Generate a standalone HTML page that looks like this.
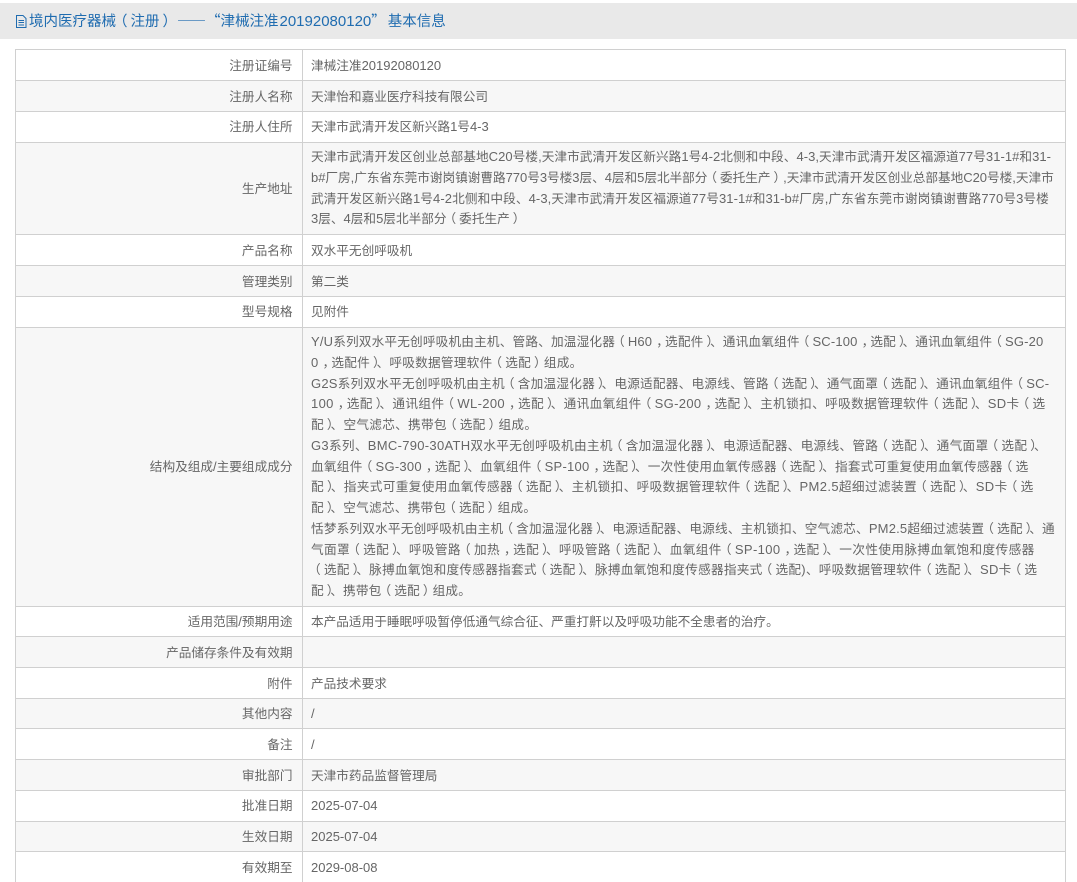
<!DOCTYPE html>
<html lang="zh-CN">
<head>
<meta charset="utf-8">
<title>基本信息</title>
<style>
html,body{margin:0;padding:0;background:#fff;}
body{width:1077px;height:882px;overflow:hidden;position:relative;font-family:"Liberation Sans","Noto Sans CJK SC",sans-serif;font-size:12.65px;color:#666;}
i{font-style:normal;font-size:13px;line-height:0;}
u,s,em{text-decoration:none;font-style:normal;position:relative;font-family:"Noto Sans CJK SC",sans-serif;line-height:0;}
u{left:-3px;}s{left:3px;}em{left:4px;}
#hd{position:absolute;left:0;top:3px;width:1077px;height:36px;background:#e9e9e9;}
#hd span{position:absolute;left:29px;top:1px;line-height:36px;color:#1f6cb0;white-space:nowrap;font-size:14.5px;}
#hd i{font-size:15px;margin-left:1px;}
#hd b{font-weight:normal;font-family:"Noto Sans CJK SC",sans-serif;line-height:0;margin-left:3px;}
#hd b.e{margin-left:0;margin-right:2px;}
#hd svg{position:absolute;left:16px;top:12px;}
#tb{position:absolute;left:15px;top:49px;width:1049px;height:833px;border-left:1px solid #d0d0d0;border-right:1px solid #d0d0d0;}
#v{position:absolute;left:286px;top:0;width:1px;height:833px;background:#d0d0d0;z-index:2;}
.r{position:absolute;left:0;width:1049px;border-top:1px solid #d0d0d0;box-sizing:border-box;}
.g{background:#f7f7f7;}
.l{position:absolute;left:0;top:var(--t);margin-top:1px;height:21px;width:276.5px;text-align:right;white-space:nowrap;line-height:21px;}
.c{position:absolute;left:295px;top:var(--t);margin-top:1px;height:21px;white-space:nowrap;line-height:21px;}
.c.m{top:0;bottom:0;margin-top:0;height:auto;display:flex;align-items:center;}
.c div{line-height:20.78px;}
.c p{margin:0;display:block;height:20.78px;}
</style>
</head>
<body>
<div id="hd"><svg width="11" height="13" viewBox="0 0 11 13" fill="none" stroke="#1f6cb0" stroke-width="1"><path d="M.5 .5H7L10 3.5V12.5H.5Z"/><path d="M2.5 5.5H8M2.5 7.5H8M2.5 10H8"/></svg><span>境内医疗器械<u>（</u>注册<s>）</s><b>——“</b>津械注准<i>20192080120</i><b class="e">”</b>基本信息</span></div>
<div id="tb">
<div id="v"></div>
<div class="r" style="top:0;height:31px;--t:5px"><div class="l">注册证编号</div><div class="c"><span>津械注准<i>20192080120</i></span></div></div>
<div class="r g" style="top:31px;height:31px;--t:5px"><div class="l">注册人名称</div><div class="c">天津怡和嘉业医疗科技有限公司</div></div>
<div class="r" style="top:62px;height:31px;--t:4px"><div class="l">注册人住所</div><div class="c"><span>天津市武清开发区新兴路<i>1</i>号<i>4-3</i></span></div></div>
<div class="r g" style="top:93px;height:92px;--t:35px"><div class="l">生产地址</div><div class="c m"><div>
<p style="letter-spacing:.05px">天津市武清开发区创业总部基地<i>C20</i>号楼<i>,</i>天津市武清开发区新兴路<i>1</i>号<i>4-2</i>北侧和中段、<i>4-3,</i>天津市武清开发区福源道<i>77</i>号<i>31-1#</i>和<i>31-</i></p>
<p style="letter-spacing:-.03px"><i>b#</i>厂房<i>,</i>广东省东莞市谢岗镇谢曹路<i>770</i>号<i>3</i>号楼<i>3</i>层、<i>4</i>层和<i>5</i>层北半部分<u>（</u>委托生产<s>）</s><i>,</i>天津市武清开发区创业总部基地<i>C20</i>号楼<i>,</i>天津市</p>
<p style="letter-spacing:.1px">武清开发区新兴路<i>1</i>号<i>4-2</i>北侧和中段、<i>4-3,</i>天津市武清开发区福源道<i>77</i>号<i>31-1#</i>和<i>31-b#</i>厂房<i>,</i>广东省东莞市谢岗镇谢曹路<i>770</i>号<i>3</i>号楼</p>
<p><i>3</i>层、<i>4</i>层和<i>5</i>层北半部分<u>（</u>委托生产<s>）</s></p>
</div></div></div>
<div class="r" style="top:185px;height:31px;--t:5px"><div class="l">产品名称</div><div class="c">双水平无创呼吸机</div></div>
<div class="r g" style="top:216px;height:31px;--t:5px"><div class="l">管理类别</div><div class="c">第二类</div></div>
<div class="r" style="top:247px;height:31px;--t:4px"><div class="l">型号规格</div><div class="c">见附件</div></div>
<div class="r g" style="top:278px;height:279px;--t:128px"><div class="l"><span>结构及组成<i>/</i>主要组成成分</span></div><div class="c m"><div>
<p style="letter-spacing:.17px"><i>Y/U</i>系列双水平无创呼吸机由主机、管路、加温湿化器<u>（</u><i>H60</i><em>，</em>选配件<s>）</s>、通讯血氧组件<u>（</u><i>SC-100</i><em>，</em>选配<s>）</s>、通讯血氧组件<u>（</u><i>SG-20</i></p>
<p style="letter-spacing:.23px"><i>0</i><em>，</em>选配件<s>）</s>、呼吸数据管理软件<u>（</u>选配<s>）</s>组成。</p>
<p style="letter-spacing:.22px"><i>G2S</i>系列双水平无创呼吸机由主机<u>（</u>含加温湿化器<s>）</s>、电源适配器、电源线、管路<u>（</u>选配<s>）</s>、通气面罩<u>（</u>选配<s>）</s>、通讯血氧组件<u>（</u><i>SC-</i></p>
<p style="letter-spacing:.35px"><i>100</i><em>，</em>选配<s>）</s>、通讯组件<u>（</u><i>WL-200</i><em>，</em>选配<s>）</s>、通讯血氧组件<u>（</u><i>SG-200</i><em>，</em>选配<s>）</s>、主机锁扣、呼吸数据管理软件<u>（</u>选配<s>）</s>、<i>SD</i>卡<u>（</u>选</p>
<p style="letter-spacing:.28px">配<s>）</s>、空气滤芯、携带包<u>（</u>选配<s>）</s>组成。</p>
<p style="letter-spacing:.3px"><i>G3</i>系列、<i>BMC-790-30ATH</i>双水平无创呼吸机由主机<u>（</u>含加温湿化器<s>）</s>、电源适配器、电源线、管路<u>（</u>选配<s>）</s>、通气面罩<u>（</u>选配<s>）</s>、</p>
<p style="letter-spacing:.26px">血氧组件<u>（</u><i>SG-300</i><em>，</em>选配<s>）</s>、血氧组件<u>（</u><i>SP-100</i><em>，</em>选配<s>）</s>、一次性使用血氧传感器<u>（</u>选配<s>）</s>、指套式可重复使用血氧传感器<u>（</u>选</p>
<p style="letter-spacing:.37px">配<s>）</s>、指夹式可重复使用血氧传感器<u>（</u>选配<s>）</s>、主机锁扣、呼吸数据管理软件<u>（</u>选配<s>）</s>、<i>PM2.5</i>超细过滤装置<u>（</u>选配<s>）</s>、<i>SD</i>卡<u>（</u>选</p>
<p style="letter-spacing:.22px">配<s>）</s>、空气滤芯、携带包<u>（</u>选配<s>）</s>组成。</p>
<p style="letter-spacing:.18px">恬梦系列双水平无创呼吸机由主机<u>（</u>含加温湿化器<s>）</s>、电源适配器、电源线、主机锁扣、空气滤芯、<i>PM2.5</i>超细过滤装置<u>（</u>选配<s>）</s>、通</p>
<p style="letter-spacing:.38px">气面罩<u>（</u>选配<s>）</s>、呼吸管路<u>（</u>加热<em>，</em>选配<s>）</s>、呼吸管路<u>（</u>选配<s>）</s>、血氧组件<u>（</u><i>SP-100</i><em>，</em>选配<s>）</s>、一次性使用脉搏血氧饱和度传感器</p>
<p style="letter-spacing:.25px"><u>（</u>选配<s>）</s>、脉搏血氧饱和度传感器指套式<u>（</u>选配<s>）</s>、脉搏血氧饱和度传感器指夹式<u>（</u>选配<i>)</i>、呼吸数据管理软件<u>（</u>选配<s>）</s>、<i>SD</i>卡<u>（</u>选</p>
<p style="letter-spacing:.15px">配<s>）</s>、携带包<u>（</u>选配<s>）</s>组成。</p>
</div></div></div>
<div class="r" style="top:557px;height:30px;--t:4px"><div class="l"><span>适用范围<i>/</i>预期用途</span></div><div class="c">本产品适用于睡眠呼吸暂停低通气综合征、严重打鼾以及呼吸功能不全患者的治疗。</div></div>
<div class="r g" style="top:587px;height:31px;--t:5px"><div class="l">产品储存条件及有效期</div><div class="c"></div></div>
<div class="r" style="top:618px;height:31px;--t:5px"><div class="l">附件</div><div class="c">产品技术要求</div></div>
<div class="r g" style="top:649px;height:30px;--t:4px"><div class="l">其他内容</div><div class="c"><i>/</i></div></div>
<div class="r" style="top:679px;height:31px;--t:5px"><div class="l">备注</div><div class="c"><i>/</i></div></div>
<div class="r g" style="top:710px;height:31px;--t:5px"><div class="l">审批部门</div><div class="c">天津市药品监督管理局</div></div>
<div class="r" style="top:741px;height:31px;--t:4px"><div class="l">批准日期</div><div class="c"><i>2025-07-04</i></div></div>
<div class="r g" style="top:772px;height:30px;--t:4px"><div class="l">生效日期</div><div class="c"><i>2025-07-04</i></div></div>
<div class="r" style="top:802px;height:31px;--t:5px"><div class="l">有效期至</div><div class="c"><i>2029-08-08</i></div></div>
</div>
</body>
</html>
